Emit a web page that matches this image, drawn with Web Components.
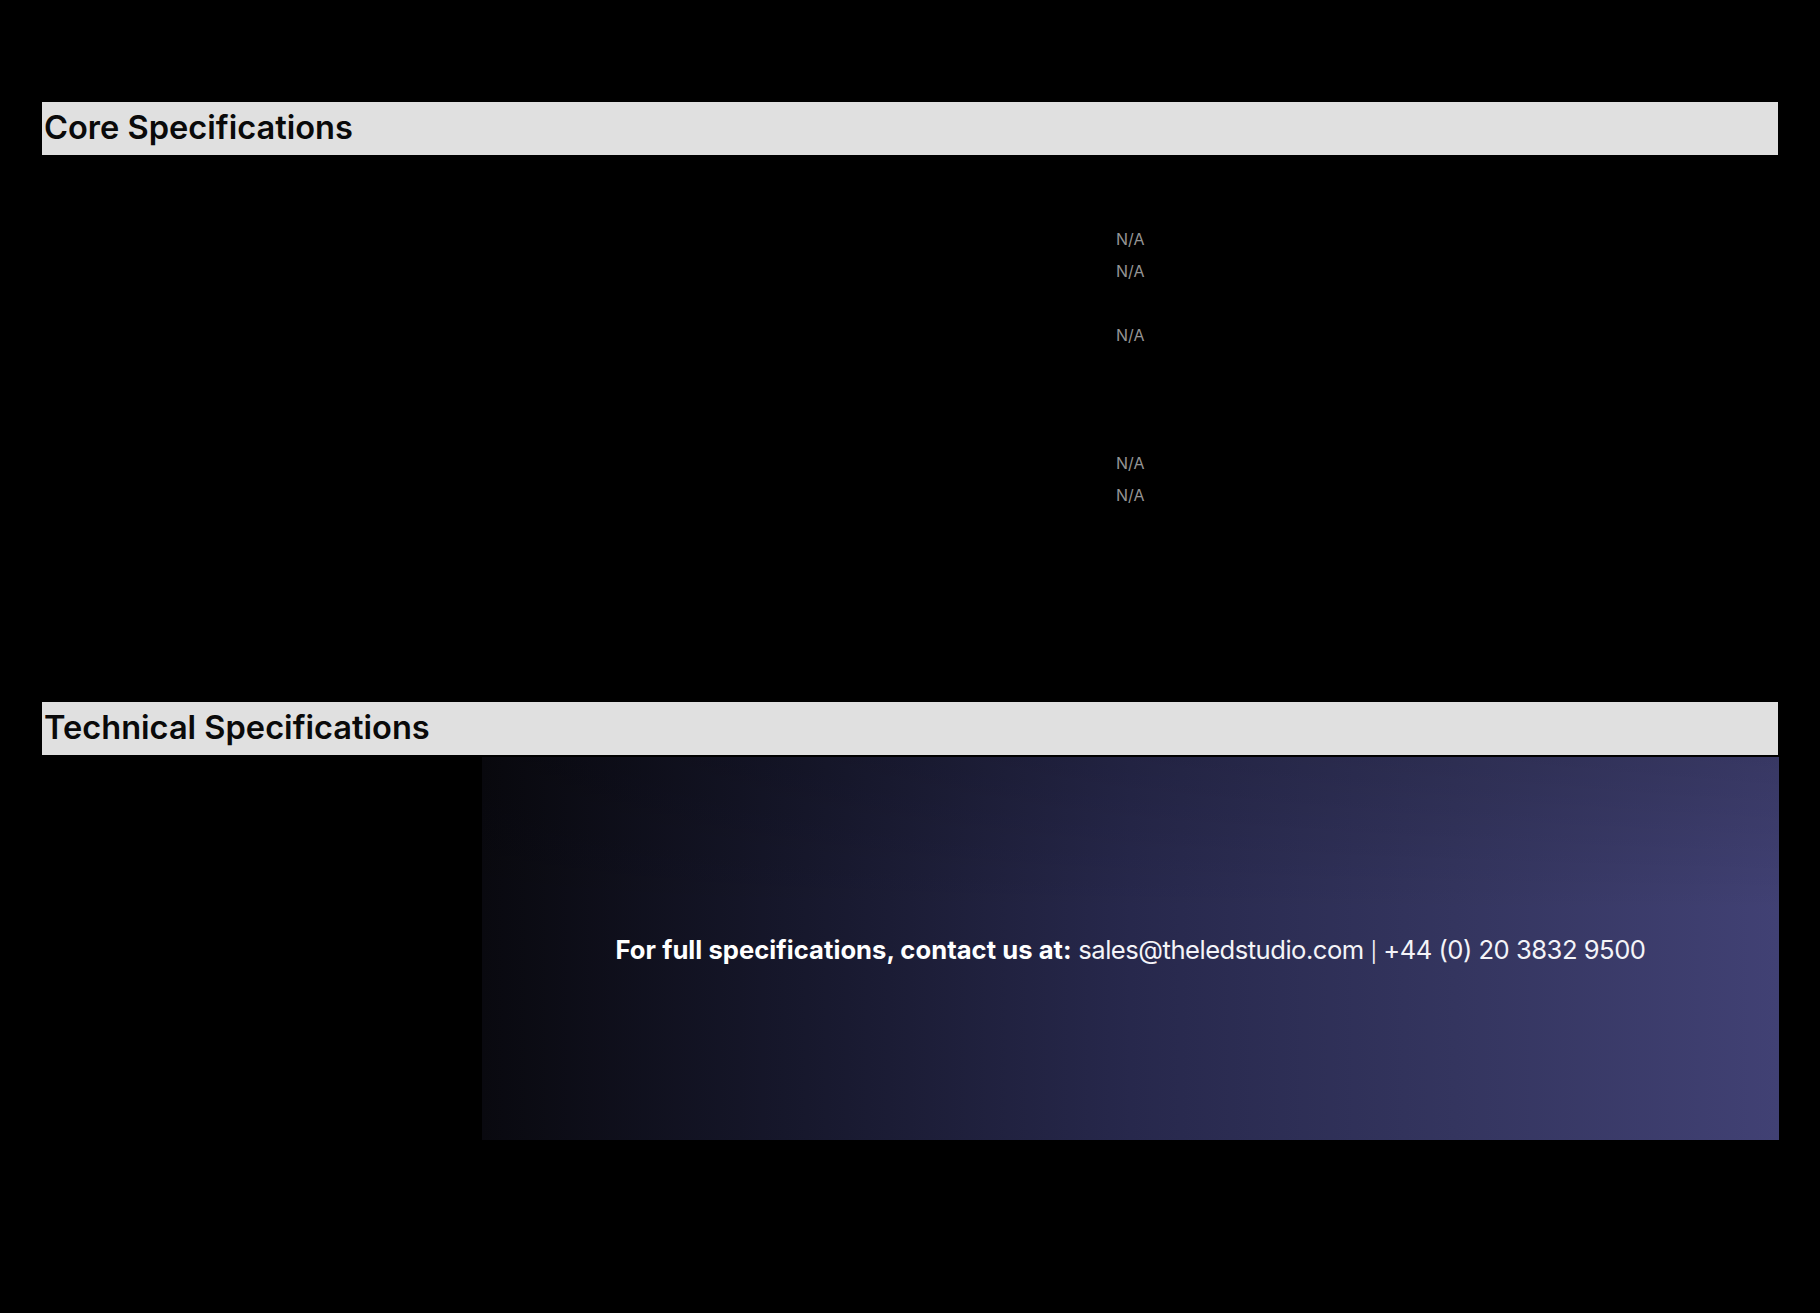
<!DOCTYPE html>
<html lang="en">
<head>
<meta charset="utf-8">
<title>Specifications</title>
<style>
html, body {
  margin: 0;
  background: #000;
}
body {
  min-height: 1313px;
  font-family: 'Inter', 'Liberation Sans', sans-serif;
}
</style>
</head>
<body>
<spec-page>
  <spec-section title="Core Specifications">
    <spec-table>
      <spec-row value="N/A"></spec-row>
      <spec-row value="N/A"></spec-row>
      <spec-row></spec-row>
      <spec-row value="N/A"></spec-row>
      <spec-row></spec-row>
      <spec-row></spec-row>
      <spec-row></spec-row>
      <spec-row value="N/A"></spec-row>
      <spec-row value="N/A"></spec-row>
    </spec-table>
  </spec-section>
  <spec-section title="Technical Specifications">
    <contact-panel><b>For full specifications, contact us at:</b> sales@theledstudio.com <i>|</i> +44 (0) 20 3832 9500</contact-panel>
  </spec-section>
</spec-page>

<script>
class SpecPage extends HTMLElement {
  constructor() {
    super();
    this._root = this.attachShadow({mode: 'open'});
    this._root.innerHTML = `
<style>
:host {
  display: flex;
  flex-flow: column;
  padding: 102px 42px 173px 42px;
}
</style>
<slot></slot>
    `;
  }
}

class SpecSection extends HTMLElement {
  constructor() {
    super();
    this._root = this.attachShadow({mode: 'open'});
    this._root.innerHTML = `
<style>
:host {
  display: block;
}
h2 {
  margin: 0;
  height: 53px;
  padding-left: 2px;
  background: #e0e0e0;
  color: #0a0a0a;
  font: 600 32.6px/50px 'Inter', 'Liberation Sans', sans-serif;
}
</style>
<h2 id="title"></h2>
<slot></slot>
    `;
    this._root.getElementById('title').textContent = this.getAttribute('title');
    this.removeAttribute('title');
  }
}

class SpecTable extends HTMLElement {
  constructor() {
    super();
    this._root = this.attachShadow({mode: 'open'});
    this._root.innerHTML = `
<style>
:host {
  display: flex;
  flex-flow: column;
  /* rows start 68px under the bar, next bar follows at y=702 */
  padding: 68px 0 191px;
}
</style>
<slot></slot>
    `;
  }
}

class SpecRow extends HTMLElement {
  constructor() {
    super();
    this._root = this.attachShadow({mode: 'open'});
    this._root.innerHTML = `
<style>
:host {
  display: grid;
  grid-template-columns: 1074px 1fr;
  height: 32px;
  align-items: center;
  color: #949494;
  font: 400 16px/32px 'Inter', 'Liberation Sans', sans-serif;
}
</style>
<span></span>
<span id="value"></span>
    `;
    this._root.getElementById('value').textContent = this.getAttribute('value') || '';
  }
}

class ContactPanel extends HTMLElement {
  constructor() {
    super();
    this._root = this.attachShadow({mode: 'open'});
    this._root.innerHTML = `
<style>
:host {
  display: flex;
  align-items: center;
  justify-content: center;
  height: 383px;
  margin: 2px -1px 0 440px;
  background:
    linear-gradient(to bottom, rgba(0, 0, 0, 0.14), rgba(0, 0, 0, 0) 40%),
    linear-gradient(90deg, #09090f 0%, #17182d 25%, #27284c 50%, #34355f 75%, #414174 100%);
  color: #f4f4f8;
  font: 400 25.6px/40px 'Inter', 'Liberation Sans', sans-serif;
  letter-spacing: -0.5px;
}
#text {
  margin-top: 4px;
}
::slotted(b) {
  font-weight: 700;
  letter-spacing: 0.04px;
  color: #fff;
}
::slotted(i) {
  font-style: normal;
  font-size: 20px;
}
</style>
<div id="text"><slot></slot></div>
    `;
  }
}

customElements.define('spec-page', SpecPage);
customElements.define('spec-section', SpecSection);
customElements.define('spec-table', SpecTable);
customElements.define('spec-row', SpecRow);
customElements.define('contact-panel', ContactPanel);
</script>
</body>
</html>
